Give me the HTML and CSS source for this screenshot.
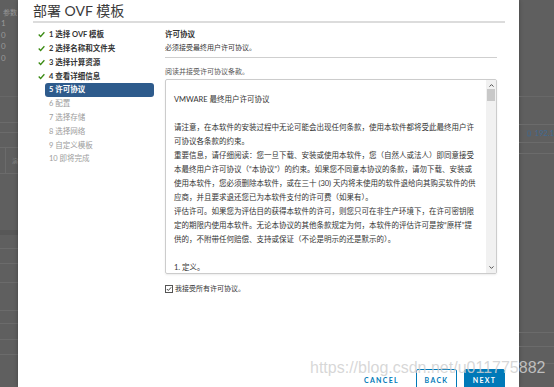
FILE: index.html
```html
<!DOCTYPE html>
<html lang="zh-CN">
<head>
  <meta charset="UTF-8">
  <meta name="viewport" content="width=device-width, initial-scale=1.0">
  <title>部署 OVF 模板</title>
  <link rel="stylesheet" href="styles.css">
</head>
<body>
  <div class="screen">
    <div class="bg-left">
      <div class="bg-block b1">
        <div class="bg-label">参数</div>
        <div class="bg-num">1</div>
        <div class="bg-num">0</div>
        <div class="bg-num">0</div>
        <div class="bg-num">0</div>
      </div>
      <div class="bg-block b2"></div>
      <div class="bg-block b3"></div>
      <div class="bg-block b4"></div>
      <div class="bg-block b5"><span class="bg-cell"></span><span class="bg-char">演</span></div>
      <div class="bg-block b6"></div>
      <div class="bg-block b7"></div>
      <div class="bg-block b8"></div>
      <div class="bg-block b9"></div>
      <div class="bg-block b10"></div>
      <div class="bg-block b11"></div>
      <div class="bg-block b12"></div>
      <div class="bg-block b13"></div>
    </div>

    <div class="modal">
      <h1 class="modal-title">部署 OVF 模板</h1>
      <div class="modal-body">
        <ul class="steps">
          <li class="step done">
            <span class="step-icon"><svg width="8" height="7" viewBox="0 0 8 7"><path d="M0.8 3.6 L3 5.8 L7.3 1" /></svg></span>
            <span class="step-label">1 选择 OVF 模板</span>
          </li>
          <li class="step done">
            <span class="step-icon"><svg width="8" height="7" viewBox="0 0 8 7"><path d="M0.8 3.6 L3 5.8 L7.3 1" /></svg></span>
            <span class="step-label">2 选择名称和文件夹</span>
          </li>
          <li class="step done">
            <span class="step-icon"><svg width="8" height="7" viewBox="0 0 8 7"><path d="M0.8 3.6 L3 5.8 L7.3 1" /></svg></span>
            <span class="step-label">3 选择计算资源</span>
          </li>
          <li class="step done">
            <span class="step-icon"><svg width="8" height="7" viewBox="0 0 8 7"><path d="M0.8 3.6 L3 5.8 L7.3 1" /></svg></span>
            <span class="step-label">4 查看详细信息</span>
          </li>
          <li class="step active">
            <span class="step-icon"></span>
            <span class="step-label">5 许可协议</span>
          </li>
          <li class="step todo">
            <span class="step-icon"></span>
            <span class="step-label">6 配置</span>
          </li>
          <li class="step todo">
            <span class="step-icon"></span>
            <span class="step-label">7 选择存储</span>
          </li>
          <li class="step todo">
            <span class="step-icon"></span>
            <span class="step-label">8 选择网络</span>
          </li>
          <li class="step todo">
            <span class="step-icon"></span>
            <span class="step-label">9 自定义模板</span>
          </li>
          <li class="step todo">
            <span class="step-icon"></span>
            <span class="step-label">10 即将完成</span>
          </li>
        </ul>

        <div class="pane">
          <div class="pane-head">
            <div class="pane-title">许可协议</div>
            <div class="pane-sub">必须接受最终用户许可协议。</div>
          </div>
          <div class="hint">阅读并接受许可协议条款。</div>

          <div class="eula">
            <p class="eula-title">VMWARE 最终用户许可协议</p>
            <p>请注意，在本软件的安装过程中无论可能会出现任何条款，使用本软件都将受此最终用户许可协议各条款的约束。</p>
            <p>重要信息，请仔细阅读：您一旦下载、安装或使用本软件，您（自然人或法人）即同意接受本最终用户许可协议（“本协议”）的约束。如果您不同意本协议的条款，请勿下载、安装或使用本软件，您必须删除本软件，或在三十 (30) 天内将未使用的软件退给向其购买软件的供应商，并且要求退还您已为本软件支付的许可费（如果有）。</p>
            <p>评估许可。如果您为评估目的获得本软件的许可，则您只可在非生产环境下，在许可密钥限定的期限内使用本软件。无论本协议的其他条款规定为何，本软件的评估许可是按“原样”提供的，不附带任何赔偿、支持或保证（不论是明示的还是默示的）。</p>
            <p class="eula-section">1. 定义。</p>
            <div class="scrollbar">
              <svg class="arrow up" width="5" height="3" viewBox="0 0 5 3"><path d="M0.5 2.6 L2.5 0.6 L4.5 2.6" /></svg>
              <div class="thumb"></div>
              <svg class="arrow down" width="5" height="3" viewBox="0 0 5 3"><path d="M0.5 0.4 L2.5 2.4 L4.5 0.4" /></svg>
            </div>
          </div>

          <label class="accept">
            <svg class="cb" width="8" height="8" viewBox="0 0 8 8"><rect x="0.5" y="0.5" width="7" height="7" /><path d="M1.8 4 L3.3 5.5 L6.2 2.3" /></svg>
            我接受所有许可协议。
          </label>
        </div>
      </div>

      <div class="modal-footer">
        <button class="btn btn-flat">Cancel</button>
        <button class="btn btn-outline">Back</button>
        <button class="btn btn-primary">Next</button>
      </div>
    </div>

    <div class="bg-right">
      <div class="bg-block r1"></div>
      <div class="bg-block r2"></div>
      <div class="bg-block r3">
        <svg width="6" height="9" viewBox="0 0 6 9"><rect x="0.5" y="0.5" width="5" height="8" rx="0.8" /><path d="M2 7.2 H4" /></svg>
        <span class="host">192.1</span>
      </div>
      <div class="bg-block r4"></div>
      <div class="bg-block r5"></div>
      <div class="bg-block r6"></div>
      <div class="bg-block r7"></div>
    </div>

    <div class="watermark">https://blog.csdn.net/u011775882</div>
  </div>
</body>
</html>
```

FILE: styles.css
```css
body {
  margin: 0;
  padding: 0;
  overflow: hidden;
  font-family: 'Lato', 'Noto Sans CJK SC', sans-serif;
}

.screen {
  position: relative;
  display: flex;
  height: 387px;
  background: #5f5f5f;
}

/* greyed-out page behind the dialog */
.bg-left {
  width: 18px;
  flex: none;
  overflow: hidden;
}

.bg-right {
  flex: 1;
  overflow: hidden;
}

.bg-block {
  box-sizing: border-box;
  border-bottom: 1px solid #6b6b6b;
}

.b1 { height: 97px; padding-top: 6px; border-color: #676767; }
.b2 { height: 26px; }
.b3 { height: 10px; }
.b4 { height: 15px; }
.b5 { height: 26px; display: flex; align-items: center; }
.b6 { height: 61px; border-bottom: 5px solid #575757; }
.b7 { height: 14px; }
.b8 { height: 15px; }
.b9 { height: 19px; }
.b10 { height: 28px; }
.b11 { height: 13px; }
.b12 { height: 16px; }
.b13 { height: 15px; }

.bg-label {
  font-size: 7px;
  line-height: 12px;
  color: #9a9a9a;
  white-space: nowrap;
  padding-left: 3px;
}

.bg-num {
  font-size: 8px;
  line-height: 11.5px;
  color: #9a9a9a;
  padding-left: 1px;
}

.bg-cell {
  width: 5px;
  height: 100%;
  border-right: 1px solid #6b6b6b;
}

.bg-char {
  font-size: 6px;
  color: #888;
  margin-left: 6px;
}

.r1 { height: 97px; border-color: #686868; }
.r2 { height: 28px; }
.r3 {
  height: 18px;
  display: flex;
  align-items: center;
  gap: 4px;
  padding-left: 8px;
}
.r4 { height: 11px; }
.r5 { height: 179px; }
.r6 { height: 14px; }
.r7 { height: 17px; }

.r3 svg rect,
.r3 svg path {
  fill: none;
  stroke: #3f6a93;
  stroke-width: 1;
}

.host {
  font-size: 7.5px;
  color: #3f6a93;
  white-space: nowrap;
}

/* dialog */
.modal {
  width: 501px;
  flex: none;
  box-sizing: border-box;
  padding: 0 14px 0 15px;
  background: #fff;
  display: flex;
  flex-direction: column;
  overflow: hidden;
  box-shadow: 0 0 4px rgba(0, 0, 0, 0.3);
}

.modal-title {
  margin: 1px 0 0;
  height: 20px;
  font-size: 14px;
  font-weight: 400;
  line-height: 20px;
  color: #3a3a3a;
  border-bottom: 2px solid #dcdcdc;
}

.modal-body {
  display: flex;
  flex: 1;
  min-height: 0;
}

.steps {
  width: 121px;
  flex: none;
  margin: 0 11px 0 0;
  padding: 5px 0 0;
  list-style: none;
}

.step {
  display: flex;
  align-items: center;
  height: 13.8px;
  font-size: 7.5px;
}

.step-icon {
  width: 12px;
  flex: none;
  display: flex;
  padding-left: 5px;
  box-sizing: border-box;
}

.step-icon path {
  fill: none;
  stroke: #3a8a12;
  stroke-width: 1.5;
}

.step-label {
  flex: 1;
  padding: 0 4px;
  line-height: 13.5px;
  border-radius: 3px;
  white-space: nowrap;
}

.step.done .step-label {
  color: #333;
  font-weight: 700;
}

.step.active .step-label {
  background: #2e5b8c;
  color: #fff;
  font-weight: 700;
}

.step.todo .step-label {
  color: #9c9c9c;
}

.pane {
  flex: 1;
  margin-right: 8px;
  padding-top: 5px;
}

.pane-head {
  padding-bottom: 3px;
  border-bottom: 1px solid #cfcfcf;
}

.pane-title {
  font-size: 7.5px;
  line-height: 13px;
  font-weight: 700;
  color: #333;
}

.pane-sub {
  font-size: 7px;
  line-height: 13px;
  color: #333;
}

.hint {
  margin: 7px 0 1px;
  font-size: 7px;
  line-height: 13px;
  color: #565656;
}

.eula {
  position: relative;
  height: 195px;
  box-sizing: border-box;
  padding: 13px 18px 0 8px;
  border: 1px solid #cccccc;
  border-radius: 2px;
  overflow: hidden;
  box-shadow: 0 1px 2px rgba(0, 0, 0, 0.08);
}

.eula p {
  margin: 0;
  font-size: 7.5px;
  line-height: 14px;
  color: #333;
}

.eula .eula-title {
  margin-bottom: 14px;
}

.eula .eula-section {
  margin-top: 14px;
}

.scrollbar {
  position: absolute;
  top: 0;
  right: 0;
  bottom: 0;
  width: 10px;
  background: #f1f1f1;
}

.arrow {
  position: absolute;
  left: 2.5px;
}

.arrow path {
  fill: none;
  stroke: #505050;
  stroke-width: 1;
}

.arrow.up { top: 4px; }
.arrow.down { bottom: 4px; }

.thumb {
  position: absolute;
  top: 9px;
  left: 1px;
  width: 8px;
  height: 12px;
  background: #c8c8c8;
}

.accept {
  display: flex;
  align-items: center;
  gap: 2px;
  margin-top: 8px;
  font-size: 7px;
  line-height: 13px;
  color: #333;
}

.cb rect {
  fill: #fff;
  stroke: #555;
  stroke-width: 1;
}

.cb path {
  fill: none;
  stroke: #444;
  stroke-width: 1;
}

.modal-footer {
  display: flex;
  justify-content: flex-end;
  align-items: flex-start;
  height: 18px;
  flex: none;
}

.btn {
  height: 22px;
  margin: 0;
  padding: 0;
  border: 1px solid transparent;
  border-radius: 2px;
  font-family: 'Lato', sans-serif;
  font-size: 7px;
  font-weight: 700;
  letter-spacing: 1.3px;
  text-transform: uppercase;
  line-height: 18px;
  cursor: pointer;
}

.btn-flat {
  padding: 0 8px;
  margin-right: 8px;
  background: none;
  color: #0079b8;
}

.btn-outline {
  width: 41px;
  margin-right: 7px;
  background: #fff;
  border-color: #0079b8;
  color: #0079b8;
}

.btn-primary {
  width: 41px;
  background: #0079b8;
  border-color: #0079b8;
  color: #fff;
}

.watermark {
  position: absolute;
  left: 310px;
  top: 359px;
  font-family: 'Liberation Sans', sans-serif;
  font-size: 16px;
  line-height: 18px;
  color: rgba(208, 208, 208, 0.85);
  white-space: nowrap;
  pointer-events: none;
}
```
